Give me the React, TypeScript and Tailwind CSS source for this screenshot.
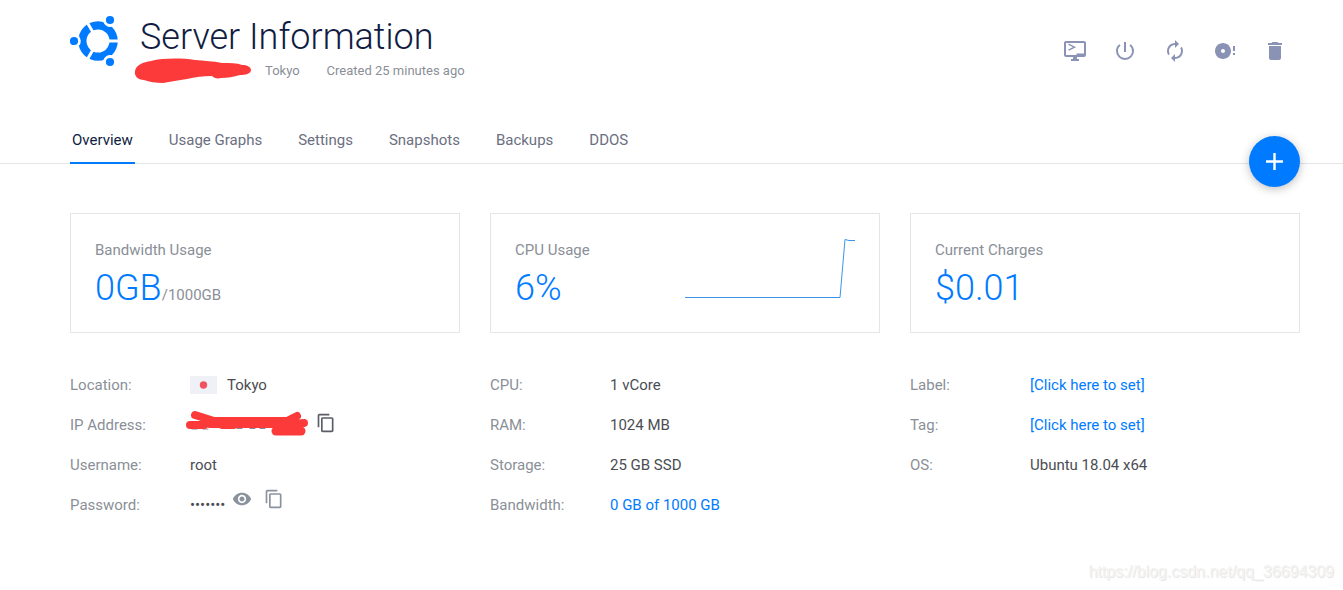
import type { ReactNode } from "react";
import {
  MdAdd,
  MdAutorenew,
  MdContentCopy,
  MdDelete,
  MdDiscFull,
  MdPowerSettingsNew,
  MdVisibility,
} from "react-icons/md";

const TABS = ["Overview", "Usage Graphs", "Settings", "Snapshots", "Backups", "DDOS"];

const ACTIONS = [
  { label: "View console", icon: <ConsoleIcon /> },
  { label: "Stop server", icon: <MdPowerSettingsNew /> },
  { label: "Restart server", icon: <MdAutorenew /> },
  { label: "Reinstall server", icon: <MdDiscFull /> },
  { label: "Destroy server", icon: <MdDelete /> },
];

function UbuntuLogo() {
  return (
    <svg width="50" height="52" viewBox="0 0 50 52" fill="#007bff" aria-label="Ubuntu">
      <mask id="ring">
        <circle cx="28" cy="26" r="19.800" fill="#fff" />
        <circle cx="28" cy="26" r="11.500" fill="#000" />
        {[0, 120, 240].map((angle) => (
          <g key={angle} transform={`rotate(${angle} 28 26)`}>
            <path d="M28 24.500h22v3H28z" fill="#000" />
            <circle cx="4" cy="26" r="6.800" fill="#000" />
          </g>
        ))}
      </mask>
      <rect width="50" height="52" mask="url(#ring)" />
      <circle cx="4" cy="26" r="4.100" />
      <circle cx="40" cy="5" r="4.100" />
      <circle cx="40" cy="47" r="4.100" />
    </svg>
  );
}

function ConsoleIcon() {
  return (
    <svg width="24" height="24" viewBox="0 0 24 24" fill="currentColor">
      <path d="M21 2H3c-1.100 0-2 .9-2 2v12c0 1.100.9 2 2 2h7v2H8v2h8v-2h-2v-2h7c1.100 0 2-.9 2-2V4c0-1.100-.9-2-2-2zm0 12.500h-7.500V16H3V4h18v10.500z" />
      <path d="M5.500 5.200l6 3-6 3" fill="none" stroke="currentColor" strokeWidth="1.400" />
    </svg>
  );
}

/* Marker strokes covering the private host name */
function HostScribble() {
  return (
    <svg width="118" height="28" viewBox="0 0 118 28" fill="#fd3a3a" aria-hidden="true">
      <path d="M1 14C2 8 9 5 17 4c12-3 30-3 44-1 9 1 18 1 27 3 8 0 15 0 20 2 5 0 9 2 9 5 0 4-6 5-11 5-7 2-12 3-19 3-4 1-7 0-9-2-9 0-17 1-25 3-9 1-16 3-24 4-7 0-14-1-19-3C4 23 0 19 1 14z" />
    </svg>
  );
}

/* Marker strokes covering the IP */
function AddressScribble() {
  return (
    <svg
      width="124"
      height="26"
      viewBox="0 0 124 26"
      fill="none"
      stroke="#fd3a3a"
      strokeLinecap="round"
      strokeLinejoin="round"
      aria-hidden="true"
    >
      <path d="M6 19h5M17 19h5M51 18.500h5M64 18.500h5M74 18.500h5" stroke="#858796" />
      <path d="M9 5l19 6M4 15h14" strokeWidth="8" />
      <path d="M24 12.500h84" strokeWidth="11" />
      <path d="M36 16h12" strokeWidth="6" />
      <path d="M103 10l8-4M108 14l10-1" strokeWidth="8" />
      <path d="M90 21h25" strokeWidth="9" />
    </svg>
  );
}

function IconButton({ label, children }: { label: string; children: ReactNode }) {
  return (
    <button type="button" aria-label={label} className="cursor-pointer">
      {children}
    </button>
  );
}

function Card({ title, chart, children }: { title: string; chart?: ReactNode; children: ReactNode }) {
  return (
    <div className="flex h-[120px] justify-between border border-[#e4e5e7] p-6">
      <div>
        <h2 className="pt-0.5 leading-5 text-[#8a8f98]">{title}</h2>
        <div className="mt-1 text-4xl font-light leading-12 text-[#007bff]">{children}</div>
      </div>
      {chart}
    </div>
  );
}

function CpuChart() {
  return (
    <svg width="171" height="62" viewBox="0 0 171 62" fill="none" stroke="#3a95ea" aria-label="CPU history">
      <path d="M1 59.500h155L161 1.500l4 1h6" />
    </svg>
  );
}

function Row({ label, children }: { label: string; children: ReactNode }) {
  return (
    <div className="flex h-5 leading-5">
      <dt className="w-[120px] shrink-0 text-[#8a8f98]">{label}</dt>
      <dd className="flex whitespace-nowrap text-[#4b4d52]">{children}</dd>
    </div>
  );
}

function BlueLink({ children }: { children: ReactNode }) {
  return (
    <a href="#" className="text-[#007bff]">
      {children}
    </a>
  );
}

export default function App() {
  return (
    <div className="bg-white font-['Roboto',sans-serif] text-[15px]">
      {/* Header */}
      <header className="flex items-start justify-between pt-[15px] pr-[43px] pl-[70px]">
        <div className="flex">
          <UbuntuLogo />
          <div className="pl-5">
            <h1 className="text-4xl font-light leading-11 text-[#101c42]">Server Information</h1>
            <div className="-ml-1.5 flex h-6 items-center text-[13px] text-[#8a8f98]">
              <HostScribble />
              <span className="pl-[13px]">Tokyo</span>
              <span className="pl-[27px]">Created 25 minutes ago</span>
            </div>
          </div>
        </div>
        <div className="flex pt-6 text-2xl text-[#8a93b5]">
          {ACTIONS.map((action) => (
            <button
              key={action.label}
              type="button"
              aria-label={action.label}
              className="flex w-[50px] cursor-pointer justify-center"
            >
              {action.icon}
            </button>
          ))}
        </div>
      </header>

      {/* Tabs */}
      <div className="relative mt-8 border-b border-[#e4e5e7] pl-[70px]">
        <nav className="-mb-px flex gap-8">
          {TABS.map((tab) => (
            <a
              key={tab}
              href="#"
              className={`border-b-2 px-0.5 pt-[15px] pb-3 leading-5 ${
                tab === "Overview" ? "border-[#007bff] text-[#101c42]" : "border-transparent text-[#6b6f80]"
              }`}
            >
              {tab}
            </a>
          ))}
        </nav>
        <button
          type="button"
          aria-label="Deploy new server"
          className="absolute right-[43px] -bottom-6 flex size-[51px] cursor-pointer items-center justify-center rounded-full bg-[#007bff] text-white shadow-[0_2px_10px_rgba(0,0,0,0.25)]"
        >
          <MdAdd className="size-[29px]" />
        </button>
      </div>

      <main className="pt-[49px] pr-[43px] pl-[70px]">
        {/* Usage cards */}
        <div className="grid grid-cols-3 gap-[30px]">
          <Card title="Bandwidth Usage">
            0GB<span className="text-[15px] font-normal text-[#8a8f98]">/1000GB</span>
          </Card>
          <Card title="CPU Usage" chart={<CpuChart />}>
            6%
          </Card>
          <Card title="Current Charges">$0.01</Card>
        </div>

        {/* Server details */}
        <div className="mt-[42px] grid grid-cols-3 gap-[30px]">
          <dl className="space-y-5">
            <Row label="Location:">
              <svg width="27" height="18" viewBox="0 0 27 18" className="mt-px mr-2.5" aria-label="Japan">
                <rect width="27" height="18" fill="#f0f1f6" />
                <circle cx="13.500" cy="9" r="3.700" fill="#f0535f" />
              </svg>
              Tokyo
            </Row>
            <Row label="IP Address:">
              <div className="-mt-1 -ml-1 flex h-6 items-center gap-1.5 text-[#5b5d66]">
                <AddressScribble />
                <IconButton label="Copy IP address">
                  <MdContentCopy className="size-5" />
                </IconButton>
              </div>
            </Row>
            <Row label="Username:">root</Row>
            <Row label="Password:">
              •••••••
              <div className="-mt-1.5 ml-[7px] flex h-5 items-center gap-3 text-[#8a929e]">
                <IconButton label="Show password">
                  <MdVisibility className="size-5" />
                </IconButton>
                <IconButton label="Copy password">
                  <MdContentCopy className="size-5" />
                </IconButton>
              </div>
            </Row>
          </dl>
          <dl className="space-y-5">
            <Row label="CPU:">1 vCore</Row>
            <Row label="RAM:">1024 MB</Row>
            <Row label="Storage:">25 GB SSD</Row>
            <Row label="Bandwidth:">
              <BlueLink>0 GB of 1000 GB</BlueLink>
            </Row>
          </dl>
          <dl className="space-y-5">
            <Row label="Label:">
              <BlueLink>[Click here to set]</BlueLink>
            </Row>
            <Row label="Tag:">
              <BlueLink>[Click here to set]</BlueLink>
            </Row>
            <Row label="OS:">Ubuntu 18.04 x64</Row>
          </dl>
        </div>
      </main>

      <footer className="pt-[47px] pr-[9px] text-right font-['Liberation_Sans',sans-serif] text-base leading-5 text-[#f4f4f4] [text-shadow:1px_1px_1px_#e2e2e2]">
        https://blog.csdn.net/qq_36694309
      </footer>
    </div>
  );
}
